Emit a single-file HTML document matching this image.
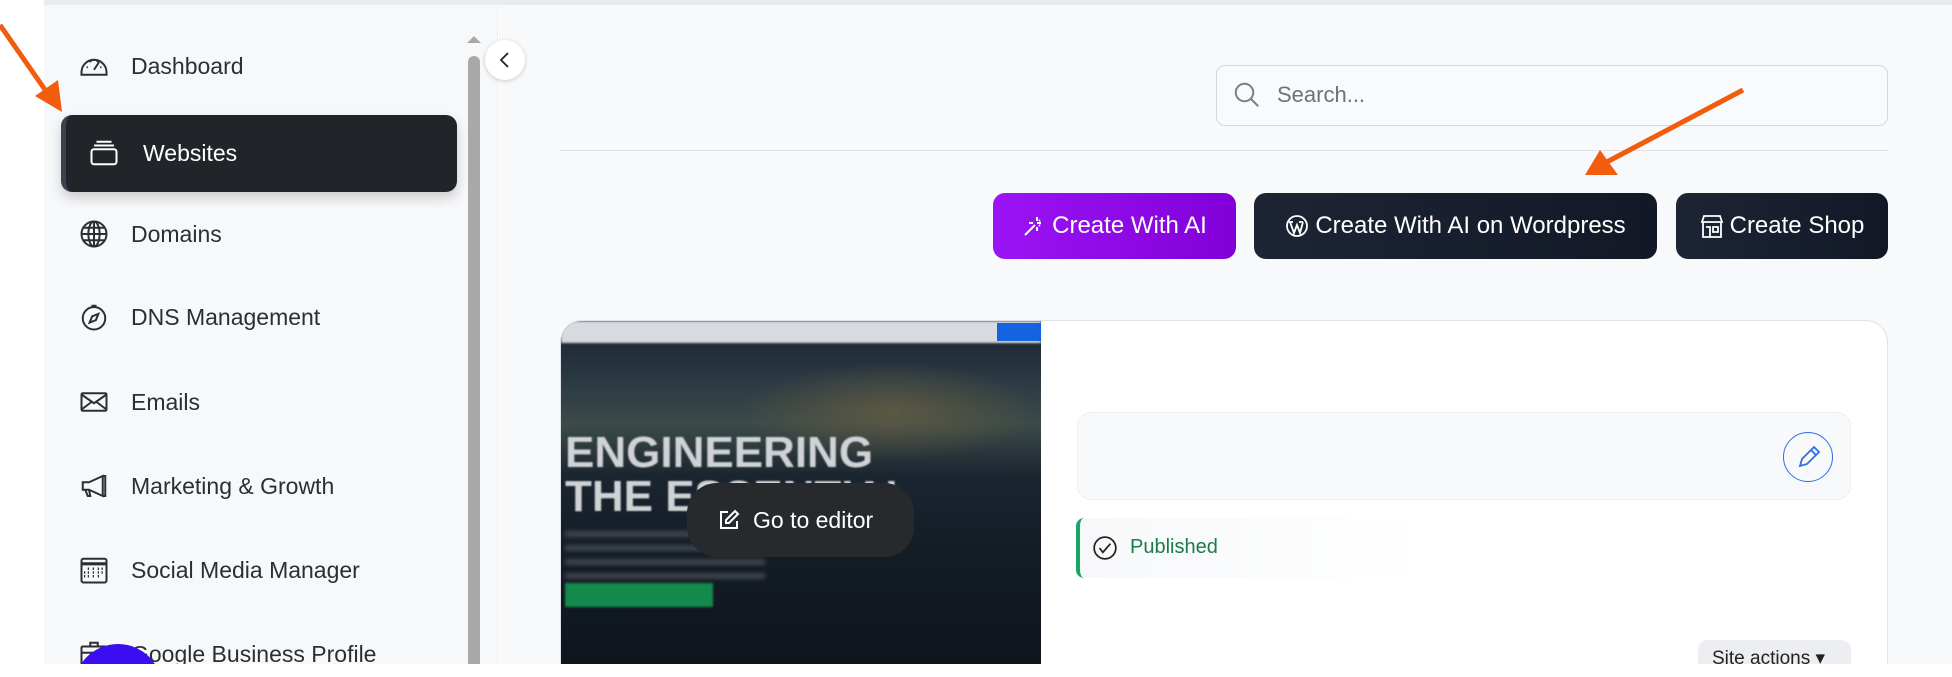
<!DOCTYPE html>
<html><head><meta charset="utf-8"><style>
*{box-sizing:border-box;margin:0;padding:0}
html,body{width:1952px;height:677px;overflow:hidden;background:#fff}
body{font-family:"Liberation Sans",sans-serif}
#w{position:relative;width:1952px;height:677px;overflow:hidden}
.topline{position:absolute;left:44px;top:0;width:1908px;height:5px;background:#e9ecef}
.side{position:absolute;left:44px;top:5px;width:454px;height:659px;background:#f7f8fa;border-right:1px solid #eceef1}
.main{position:absolute;left:499px;top:5px;width:1453px;height:659px;background:#f8f9fb}
.item{position:absolute;left:93px;height:30px;display:flex;align-items:center;font-size:23px;color:#2b2f33}
.item svg{position:absolute;left:-14px;width:30px;height:30px}
.item span{position:absolute;left:38px;white-space:nowrap}
.active{position:absolute;left:61px;top:115px;width:396px;height:77px;background:#212529;border-radius:11px;box-shadow:0 6px 12px rgba(0,0,0,.18);border-left:5px solid #3a4250}
.scroll{position:absolute;left:468px;top:56px;width:12px;height:608px;background:#a9a9a9;border-radius:6px 6px 0 0}
.btn{position:absolute;top:193px;height:66px;border-radius:12px;color:#fff;font-size:24px;display:flex;align-items:center;justify-content:center;gap:6px;white-space:nowrap}
</style></head><body><div id="w">
<div class="topline"></div>
<div class="side"></div>
<div class="main"></div>
<div class="item" style="top:51px"><svg viewBox="0 0 24 24" fill="none" stroke="#2b2f33" stroke-width="1.6"><path d="M2 17a10 10 0 0 1 20 0v2H2z"/><path d="M12 15l4-6"/><path d="M6 13h1M17 13h1M9 8l.5 1M12 7v1M15 8l-.5 1"/></svg><span>Dashboard</span></div>
<div class="active"></div>
<div class="item" style="top:138px;left:103px;color:#fff"><svg viewBox="0 0 24 24" fill="none" stroke="#fff" stroke-width="1.6"><rect x="2" y="9" width="20" height="12" rx="2"/><path d="M4 6h16M6 3h12"/></svg><span style="left:40px">Websites</span></div>
<div class="item" style="top:219px"><svg viewBox="0 0 24 24" fill="none" stroke="#2b2f33" stroke-width="1.6"><circle cx="12" cy="12" r="10"/><ellipse cx="12" cy="12" rx="4.5" ry="10"/><path d="M2 12h20M4 7h16M4 17h16M12 2v20"/></svg><span>Domains</span></div>
<div class="item" style="top:302px"><svg viewBox="0 0 24 24" fill="none" stroke="#2b2f33" stroke-width="1.6"><circle cx="12" cy="13" r="9"/><path d="M10 3h4M15.5 9.5l-2 5-5 2 2-5z"/></svg><span>DNS Management</span></div>
<div class="item" style="top:387px"><svg viewBox="0 0 24 24" fill="none" stroke="#2b2f33" stroke-width="1.6"><rect x="2" y="5" width="20" height="14" rx="1"/><path d="M2 6l10 7 10-7M2 18l8-6M22 18l-8-6"/></svg><span>Emails</span></div>
<div class="item" style="top:471px"><svg viewBox="0 0 24 24" fill="none" stroke="#2b2f33" stroke-width="1.6"><path d="M3 9h5l11-5v16L8 15H3z"/><path d="M19 4h2v16h-2M5 15l2 5h2l-1-5"/></svg><span>Marketing &amp; Growth</span></div>
<div class="item" style="top:555px"><svg viewBox="0 0 24 24" fill="none" stroke="#2b2f33" stroke-width="1.6"><rect x="2" y="3" width="20" height="19" rx="1.5"/><path d="M2 7h20" stroke-width="2.5"/><path d="M7 11h1M11 11h1M15 11h1M7 14h1M11 14h1M15 14h1M7 17h1M11 17h1M15 17h1M18 11h1M18 14h1M4 14h1M4 17h1" stroke-width="2"/></svg><span>Social Media Manager</span></div>
<div class="item" style="top:639px"><svg viewBox="0 0 24 24" fill="none" stroke="#2b2f33" stroke-width="1.6"><rect x="2" y="6" width="20" height="15" rx="1"/><path d="M9 6V3h6v3M2 11h20"/></svg><span>Google Business Profile</span></div>
<svg style="position:absolute;left:70px;top:644px" width="100" height="20"><circle cx="48" cy="44" r="44" fill="#3b0df0"/></svg>
<div style="position:absolute;left:467px;top:36px;width:0;height:0;border-left:7px solid transparent;border-right:7px solid transparent;border-bottom:7px solid #a9a9a9"></div>
<div class="scroll"></div>
<div style="position:absolute;left:485px;top:40px;width:40px;height:40px;border-radius:50%;background:#fff;box-shadow:0 1px 4px rgba(0,0,0,.2)"><svg width="40" height="40" viewBox="0 0 40 40"><path d="M23 13l-7 7 7 7" fill="none" stroke="#222" stroke-width="1.8"/></svg></div>
<div style="position:absolute;left:1216px;top:65px;width:672px;height:61px;border:1px solid #d6d9dd;border-radius:9px;background:#f9fafb"></div>
<svg style="position:absolute;left:1232px;top:80px" width="30" height="30" viewBox="0 0 24 24" fill="none" stroke="#7a8088" stroke-width="1.6"><circle cx="10" cy="10" r="7"/><path d="M15 15l6 6"/></svg>
<div style="position:absolute;left:1277px;top:82px;font-size:22px;color:#6c737a">Search...</div>
<div style="position:absolute;left:560px;top:150px;width:1328px;height:1px;background:#dfe2e6"></div>
<div class="btn" style="left:993px;width:243px;background:linear-gradient(90deg,#9b14f5,#8100d8)"><svg width="24" height="24" viewBox="0 0 24 24" fill="none" stroke="#fff" stroke-width="2"><path d="M3 21L13 11M15 3v4M15 13v4M19 9h-4M11 9H7M18 6l-1 1M12 12l-1 1M18 12l-1-1"/></svg>Create With AI</div>
<div class="btn" style="left:1254px;width:403px;background:linear-gradient(90deg,#1d2535,#121826)"><svg width="24" height="24" viewBox="0 0 24 24" fill="none" stroke="#fff" stroke-width="1.8"><circle cx="12" cy="12" r="10"/><path d="M5 8l4 11 3-8 3 8 3-11M4 8h4M14 8h4"/></svg>Create With AI on Wordpress</div>
<div class="btn" style="left:1676px;width:212px;background:linear-gradient(90deg,#1d2535,#121826)"><svg width="24" height="26" viewBox="0 0 24 26" fill="none" stroke="#fff" stroke-width="1.8"><path d="M4 3h16l2 6H2z"/><path d="M3 9v15h18V9M6 14h4v10M13 14h5v5h-5z"/></svg>Create Shop</div>
<div style="position:absolute;left:560px;top:320px;width:1328px;height:344px;background:#fff;border:1px solid #dfe2e6;border-bottom:none;border-radius:22px 22px 0 0;overflow:hidden">
 <div style="position:absolute;left:0;top:0;width:480px;height:344px;background:linear-gradient(180deg,#17212c 0%,#2c3a44 18%,#3c4a48 30%,#1b2530 45%,#131b24 70%,#0f151d 100%)">
  <div style="position:absolute;left:0;top:0;width:480px;height:22px;background:#d7dade;filter:blur(1px)"></div>
  <div style="position:absolute;left:436px;top:2px;width:44px;height:18px;background:#1463e0"></div>
  <div style="position:absolute;left:180px;top:40px;width:300px;height:100px;background:radial-gradient(ellipse,#6b6040 0%,transparent 70%);opacity:.7"></div>
  <div style="position:absolute;left:4px;top:110px;font-size:44px;font-weight:bold;color:#d0d3d5;line-height:44px;filter:blur(.8px);white-space:nowrap">ENGINEERING<br>THE ESSENTIAL</div>
  <div style="position:absolute;left:4px;top:210px;width:200px;height:50px;background:repeating-linear-gradient(180deg,#5a6068 0 6px,transparent 6px 14px);filter:blur(2px);opacity:.6"></div>
  <div style="position:absolute;left:4px;top:262px;width:148px;height:24px;background:#138a4c;filter:blur(1px)"></div>
 </div>
 <div style="position:absolute;left:1137px;top:319px;width:153px;height:25px;border-radius:10px 10px 0 0;background:#eceef1;font-size:19px;color:#222;padding:8px 0 0 14px;white-space:nowrap;overflow:hidden;line-height:22px">Site actions ▾</div>
</div>
<div style="position:absolute;left:687px;top:483px;width:227px;height:74px;border-radius:30px;background:#272a2d;color:#fff;font-size:23px;display:flex;align-items:center;padding-left:30px;gap:12px"><svg width="24" height="24" viewBox="0 0 24 24" fill="none" stroke="#fff" stroke-width="2"><path d="M11 4H4v16h16v-7"/><path d="M18 3l3 3-9 9H9v-3z"/></svg>Go to editor</div>
<div style="position:absolute;left:1077px;top:412px;width:774px;height:88px;border:1px solid #eceef1;border-radius:14px;background:#f8f9fb"></div>
<div style="position:absolute;left:1783px;top:432px;width:50px;height:50px;border-radius:50%;border:1.5px solid #2f6fe4"><svg width="48" height="48" viewBox="0 0 48 48" fill="none" stroke="#2f6fe4" stroke-width="1.8"><path d="M16 33l2-7 12-12 5 5-12 12z M27 17l5 5"/></svg></div>
<div style="position:absolute;left:1076px;top:518px;width:350px;height:60px;border-left:4px solid #1aa56b;border-radius:8px;background:linear-gradient(90deg,#f7f8fa,#fff)"></div>
<svg style="position:absolute;left:1092px;top:535px" width="26" height="26" viewBox="0 0 24 24" fill="none" stroke="#222" stroke-width="1.6"><circle cx="12" cy="12" r="10"/><path d="M7 12l3 4 7-8"/></svg>
<div style="position:absolute;left:1130px;top:536px;font-size:20px;color:#1d7a4a">Published</div>
<svg style="position:absolute;left:0;top:0" width="1952" height="677">
<path d="M0 25L48 94" stroke="#f25c0d" stroke-width="5"/><path d="M35 96L62 112L58 80z" fill="#f25c0d"/>
<path d="M1743 90L1605 163" stroke="#f25c0d" stroke-width="5"/><path d="M1585 175L1618 175L1600 150z" fill="#f25c0d"/>
</svg>
<div style="position:absolute;left:0;top:664px;width:1952px;height:13px;background:#fff"></div>
</div></body></html>
